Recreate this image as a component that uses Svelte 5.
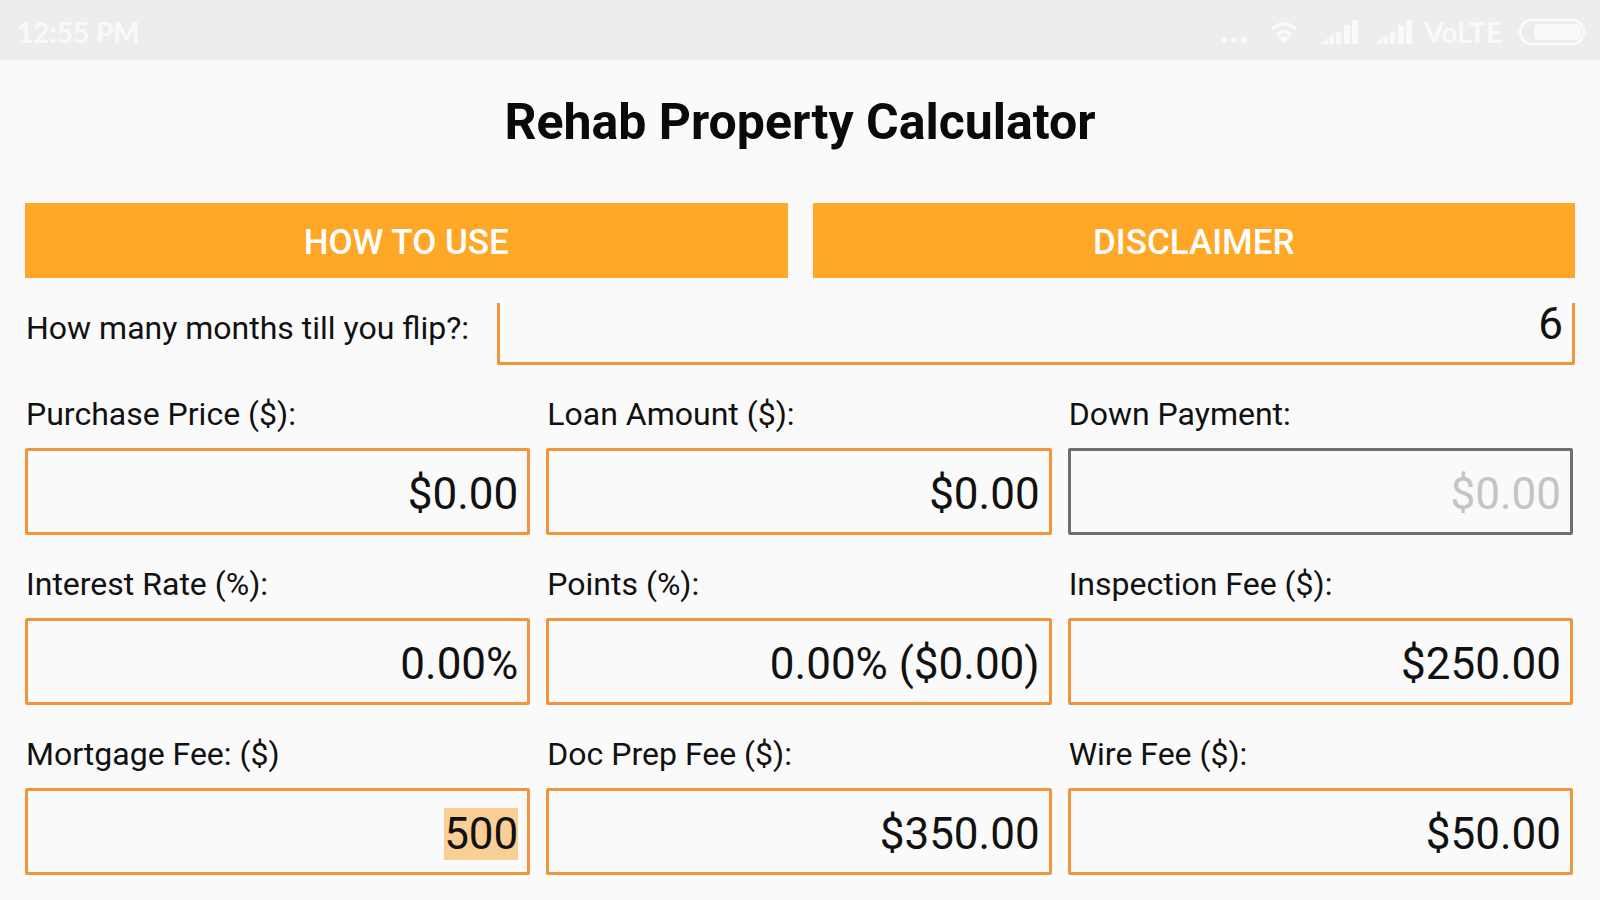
<script lang="ts">
  import { onMount } from 'svelte';

  let months = $state('6');
  let fields = $state([
    { id: 'purchase-price', label: 'Purchase Price ($):', value: '$0.00' },
    { id: 'loan-amount', label: 'Loan Amount ($):', value: '$0.00' },
    { id: 'down-payment', label: 'Down Payment:', value: '$0.00', disabled: true },
    { id: 'interest-rate', label: 'Interest Rate (%):', value: '0.00%' },
    { id: 'points', label: 'Points (%):', value: '0.00% ($0.00)' },
    { id: 'inspection-fee', label: 'Inspection Fee ($):', value: '$250.00' },
    { id: 'mortgage-fee', label: 'Mortgage Fee: ($)', value: '500' },
    { id: 'doc-prep-fee', label: 'Doc Prep Fee ($):', value: '$350.00' },
    { id: 'wire-fee', label: 'Wire Fee ($):', value: '$50.00' }
  ]);

  onMount(() => {
    const input = document.getElementById('mortgage-fee') as HTMLInputElement;
    input.focus();
    input.select();
  });
</script>

{#snippet signal()}
  <svg width="38" height="24" viewBox="0 0 38 24" aria-hidden="true">
    <path d="M0 24 L8 18 V24 Z M9 17 L14 14 V24 H9 Z M16 12 h5 v12 h-5 Z M24 5 h6 v19 h-6 Z M32 0 h6 v24 h-6 Z" />
  </svg>
{/snippet}

<div class="status">
  <span>12:55 PM</span>
  <div class="indicators">
    <svg width="28" height="24" viewBox="0 0 28 24" aria-hidden="true">
      <circle cx="4" cy="20" r="3" />
      <circle cx="14" cy="20" r="3" />
      <circle cx="24" cy="20" r="3" />
    </svg>
    <svg class="wifi" width="28" height="24" viewBox="0 0 28 24" aria-hidden="true">
      <path class="arc" d="M2 9 Q14 -1 26 9" />
      <path class="arc" d="M7 15 Q14 8 21 15" />
      <path d="M9 18 Q14 14 19 18 L14 24 Z" />
    </svg>
    {@render signal()}
    {@render signal()}
    <div class="network">
      <span>VoLTE</span>
      <svg width="68" height="28" viewBox="0 0 68 28" aria-hidden="true">
        <rect class="shell" x="2" y="2" width="64" height="24" rx="12" />
        <rect x="16" y="6" width="47" height="16" rx="4" />
      </svg>
    </div>
  </div>
</div>

<main>
  <h1>Rehab Property Calculator</h1>

  <div class="buttons">
    <button type="button">HOW TO USE</button>
    <button type="button">DISCLAIMER</button>
  </div>

  <div class="months">
    <label for="months">How many months till you flip?:</label>
    <input id="months" type="text" inputmode="numeric" bind:value={months} />
  </div>

  <div class="fields">
    {#each fields as field (field.id)}
      <div class="field">
        <label for={field.id}>{field.label}</label>
        <input id={field.id} type="text" disabled={field.disabled} bind:value={field.value} />
      </div>
    {/each}
  </div>
</main>

<style>
  :global(body) {
    margin: 0;
    background: #fafafa;
    color: #111;
    font-family: Roboto, sans-serif;
  }

  .status {
    display: flex;
    align-items: center;
    justify-content: space-between;
    box-sizing: border-box;
    height: 60px;
    padding: 4px 14px 0 17px;
    background: #ededef;
    color: #f9f9fa;
    font: bold 28px/40px Lato, sans-serif;

    svg {
      fill: #f9f9fa;
    }
  }

  .indicators {
    display: flex;
    align-items: center;
    gap: 16px;

    .arc,
    .shell {
      fill: none;
      stroke: #f9f9fa;
      stroke-width: 3;
    }
    .arc {
      stroke-width: 4;
    }
    .wifi {
      margin: 0 6px;
    }
  }

  .network {
    display: flex;
    align-items: center;
    gap: 16px;
    margin-left: -4px;
  }

  main {
    padding: 0 25px 25px;
  }

  h1 {
    margin: 0;
    padding: 32px 0 51px;
    color: #0a0a0a;
    font-size: 50px;
    line-height: 60px;
    font-weight: bold;
    text-align: center;
  }

  .buttons {
    display: grid;
    grid-template-columns: 1fr 1fr;
    gap: 25px;
  }

  button {
    height: 75px;
    padding: 4px 0 0;
    border: 0;
    background: #ffa726;
    color: #fff;
    font: 500 35px/40px Roboto, sans-serif;
  }

  label {
    padding-left: 1px;
    font-size: 32px;
    line-height: 40px;
    white-space: nowrap;
  }

  input {
    box-sizing: border-box;
    width: 100%;
    min-width: 0;
    height: 87px;
    padding: 5px 9px 0;
    border: 3px solid #f0953a;
    border-radius: 2px;
    outline: none;
    background: transparent;
    color: #111;
    font: 44px/62px Roboto, sans-serif;
    text-align: right;

    &::selection {
      background: #f9cf95;
      color: #111;
    }
    &:disabled {
      border-color: #6e6e6e;
      color: #c4c4c4;
    }
  }

  /* the row is scrolled partly under the buttons */
  .months {
    display: flex;
    align-items: flex-end;
    gap: 28px;
    height: 62px;
    margin-top: 25px;
    overflow: hidden;

    label {
      padding-bottom: 17px;
    }
  }

  .fields {
    display: grid;
    grid-template-columns: repeat(3, 1fr);
    gap: 29px 16px;
    margin: 29px 2px 0 0;
  }

  .field {
    display: flex;
    flex-direction: column;
    gap: 14px;
  }
</style>
